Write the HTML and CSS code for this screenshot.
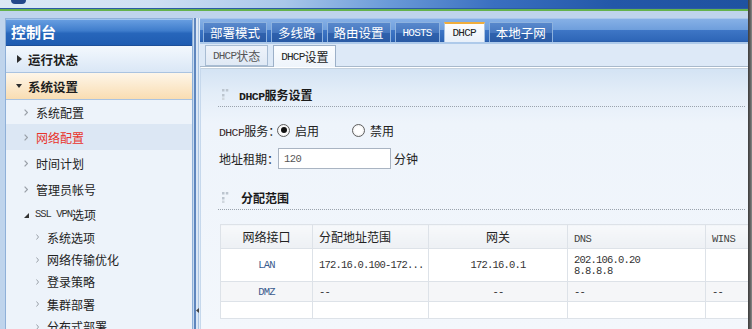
FILE: index.html
```html
<!DOCTYPE html>
<html lang="zh-CN">
<head>
<meta charset="utf-8">
<title>控制台 - DHCP设置</title>
<link rel="stylesheet" href="styles.css">
</head>
<body>
<div class="page">
  <header class="top"><span class="logo"></span></header>
  <div class="main">
    <aside class="side">
      <div class="side-title">控制台</div>
      <div class="grp grp-closed"><span class="tri-r"></span>运行状态</div>
      <div class="grp grp-open"><span class="tri-d"></span>系统设置</div>
      <ul class="items">
        <li class="it first"><svg class="chev" width="4" height="7" viewBox="0 0 4 7"><path d="M0.6 0.6 L3.4 3.5 L0.6 6.4" fill="none" stroke="#9aa0a8" stroke-width="1.2"/></svg>系统配置</li>
        <li class="it cur"><svg class="chev" width="4" height="7" viewBox="0 0 4 7"><path d="M0.6 0.6 L3.4 3.5 L0.6 6.4" fill="none" stroke="#9aa0a8" stroke-width="1.2"/></svg>网络配置</li>
        <li class="it"><svg class="chev" width="4" height="7" viewBox="0 0 4 7"><path d="M0.6 0.6 L3.4 3.5 L0.6 6.4" fill="none" stroke="#9aa0a8" stroke-width="1.2"/></svg>时间计划</li>
        <li class="it"><svg class="chev" width="4" height="7" viewBox="0 0 4 7"><path d="M0.6 0.6 L3.4 3.5 L0.6 6.4" fill="none" stroke="#9aa0a8" stroke-width="1.2"/></svg>管理员帐号</li>
        <li class="it ssl"><svg class="corner" width="5" height="5" viewBox="0 0 5 5"><polygon points="5,0 5,5 0,5" fill="#333"/></svg><span class="m ssl-m">SSL VPN</span>选项</li>
        <li class="it2"><svg class="chev2" width="3" height="6" viewBox="0 0 3 6"><path d="M0.5 0.5 L2.5 3 L0.5 5.5" fill="none" stroke="#9aa0a8" stroke-width="1"/></svg>系统选项</li>
        <li class="it2"><svg class="chev2" width="3" height="6" viewBox="0 0 3 6"><path d="M0.5 0.5 L2.5 3 L0.5 5.5" fill="none" stroke="#9aa0a8" stroke-width="1"/></svg>网络传输优化</li>
        <li class="it2"><svg class="chev2" width="3" height="6" viewBox="0 0 3 6"><path d="M0.5 0.5 L2.5 3 L0.5 5.5" fill="none" stroke="#9aa0a8" stroke-width="1"/></svg>登录策略</li>
        <li class="it2"><svg class="chev2" width="3" height="6" viewBox="0 0 3 6"><path d="M0.5 0.5 L2.5 3 L0.5 5.5" fill="none" stroke="#9aa0a8" stroke-width="1"/></svg>集群部署</li>
        <li class="it2"><svg class="chev2" width="3" height="6" viewBox="0 0 3 6"><path d="M0.5 0.5 L2.5 3 L0.5 5.5" fill="none" stroke="#9aa0a8" stroke-width="1"/></svg>分布式部署</li>
      </ul>
    </aside>
    <div class="splitter"><svg class="split-arrow" width="3" height="5" viewBox="0 0 3 5"><polygon points="3,0 3,5 0,2.5" fill="#444"/></svg></div>
    <section class="content">
      <nav class="tabs">
        <span class="tab">部署模式</span>
        <span class="tab">多线路</span>
        <span class="tab">路由设置</span>
        <span class="tab m">HOSTS</span>
        <span class="tab tab-on m">DHCP</span>
        <span class="tab">本地子网</span>
      </nav>
      <div class="subtabs">
        <span class="stab"><span class="m">DHCP</span>状态</span>
        <span class="stab stab-on"><span class="m">DHCP</span>设置</span>
      </div>
      <div class="body">
        <div class="sec">
          <svg class="sec-ico" width="7" height="11" viewBox="0 0 7 11"><rect x="0" y="0" width="2.5" height="2.5" fill="#bcc5cf"/><rect x="3.8" y="0" width="2.5" height="2.5" fill="#bcc5cf"/><rect x="0" y="5" width="2.5" height="2.5" fill="#bcc5cf"/><rect x="0" y="8.5" width="2.5" height="2.5" fill="#d0d7de"/></svg>
          <span><span class="m mb">DHCP</span>服务设置</span>
        </div>
        <div class="frow r1">
          <span class="lbl"><span class="m ml">DHCP</span>服务：</span>
          <span class="radio on"></span><span class="rtxt">启用</span>
          <span class="radio r2"></span><span class="rtxt">禁用</span>
        </div>
        <div class="frow r2row">
          <span class="lbl">地址租期：</span>
          <span class="inp m">120</span>
          <span class="unit">分钟</span>
        </div>
        <div class="sec sec2">
          <svg class="sec-ico" width="7" height="11" viewBox="0 0 7 11"><rect x="0" y="0" width="2.5" height="2.5" fill="#bcc5cf"/><rect x="3.8" y="0" width="2.5" height="2.5" fill="#bcc5cf"/><rect x="0" y="5" width="2.5" height="2.5" fill="#bcc5cf"/><rect x="0" y="8.5" width="2.5" height="2.5" fill="#d0d7de"/></svg>
          <span>分配范围</span>
        </div>
        <table class="tbl">
          <colgroup><col class="c1"><col class="c2"><col class="c3"><col class="c4"><col class="c5"></colgroup>
          <thead>
            <tr class="hd"><th class="ctr">网络接口</th><th>分配地址范围</th><th class="ctr">网关</th><th><span class="m">DNS</span></th><th><span class="m">WINS</span></th></tr>
          </thead>
          <tbody>
            <tr class="row-lan"><td class="ctr m ifc">LAN</td><td class="m">172.16.0.100-172...</td><td class="ctr m">172.16.0.1</td><td class="m dns">202.106.0.20<br>8.8.8.8</td><td></td></tr>
            <tr class="row-dmz"><td class="ctr m ifc">DMZ</td><td class="m">--</td><td class="ctr m">--</td><td class="m">--</td><td class="m">--</td></tr>
            <tr class="row-empty"><td></td><td></td><td></td><td></td><td></td></tr>
          </tbody>
        </table>
      </div>
    </section>
  </div>
</div>
<div class="edge"></div>
</body>
</html>
```
FILE: styles.css
```css
* { box-sizing: border-box; margin: 0; padding: 0; }
html, body { width: 752px; height: 329px; overflow: hidden; }
body {
  display: flex;
  background: #bfd4ec;
  font-family: "Noto Sans CJK SC", "Noto Sans", sans-serif;
  font-size: 12px;
  color: #222;
}
.m { font-family: "Liberation Mono", "Noto Sans CJK SC", monospace; font-size: 10px; letter-spacing: -0.5px; }

.page { width: 748px; flex: none; display: flex; flex-direction: column; height: 329px; }
.edge { width: 4px; flex: none; background: linear-gradient(to right, #3c3c3c, #5a5a5a 50%, #8a8a8a); }

/* header strip */
.top {
  height: 11px; flex: none;
  background: linear-gradient(to right, #dce9f6 0, #cfe0f3 20%, #a9c7ea 38%, #6a9ad8 52%, #3a6fc0 66%, #2357a8 82%, #1f52a0 100%);
  border-bottom: 2px solid #64b24c;
  box-shadow: inset 0 -1px 0 #2a5ca4;
}
.logo { display: block; width: 15px; height: 4px; margin-left: 11px; background: #24488a; border-radius: 0 0 8px 8px; }

.main { flex: 1; display: flex; padding: 7px 0 0 5px; min-height: 0; }

/* sidebar */
.side { width: 188px; flex: none; background: #edf3fa; border: 1px solid #8fb0d8; border-bottom: none; overflow: hidden; }
.side-title {
  height: 27px; line-height: 26px; padding-left: 5px;
  color: #fff; font-size: 15px; font-weight: bold;
  background: linear-gradient(#6aa0e2 0, #3f7dcc 45%, #2766bb 55%, #1f5cb1 100%);
  box-shadow: inset 0 1px 0 #9cc3ee;
  border-bottom: 1px solid #1d4f98;
}
.grp { height: 27px; display: flex; align-items: center; padding-left: 11px; font-weight: bold; font-size: 12.5px; color: #1e1e1e; border-bottom: 1px solid #aac3e0; }
.grp-closed { background: linear-gradient(#f3f8fd, #dae7f6); }
.grp-open { background: linear-gradient(#fef6e9, #f9ddb2); }
.tri-r { width: 0; height: 0; border-left: 5px solid #2d2d2d; border-top: 4px solid transparent; border-bottom: 4px solid transparent; margin-right: 6px; }
.tri-d { width: 0; height: 0; border-top: 4px solid #2d2d2d; border-left: 3.5px solid transparent; border-right: 3.5px solid transparent; margin: 0 6px 0 -1px; }

.items { list-style: none; }
.it { height: 26px; display: flex; align-items: center; padding-left: 18px; font-size: 12px; color: #222; }
.it.first { height: 24px; }
.it.ssl { height: 24px; }
.it.cur { background: #dce7f4; color: #e8332b; }
.chev { margin-right: 8px; flex: none; }
.corner { margin-right: 6px; margin-top: 2px; flex: none; }
.ssl-m { font-size: 10.5px; letter-spacing: -1px; color: #333; }
.it2 { height: 22.4px; display: flex; align-items: center; padding-left: 30px; font-size: 12px; color: #222; }
.chev2 { margin-right: 8px; flex: none; }

/* splitter */
.splitter {
  width: 7px; flex: none; display: flex; flex-direction: column; align-items: center;
  background: linear-gradient(to right, #c7daef 0, #c7daef 1px, #5e86be 1px, #5e86be 3px, #dbe7f5 3px, #dbe7f5 5px, #aac4e2 5px, #aac4e2 6px, #e3edf8 6px);
}
.split-arrow { margin-top: 290px; margin-left: 1px; }

/* content */
.content { width: 548px; flex: none; display: flex; flex-direction: column; overflow: hidden; }
.tabs {
  height: 24px; flex: none; display: flex; align-items: flex-end; gap: 4px; padding-left: 3px;
  background: linear-gradient(#a9c7eb 0, #a9c7eb 1px, #86b0e6 1px, #6e9edc 50%, #3e76c6 50%, #2f67b8 92%, #2a5ca8 100%);
}
.tab {
  height: 20px; padding: 0 6px; display: flex; align-items: center;
  color: #fff; font-size: 12.5px;
  border: 1px solid #8db2df; border-bottom: none;
  background: linear-gradient(#5888cc 0, #4778c0 50%, #2f62ae 50%, #2a5aa4 100%);
}
.tab.m { font-size: 11px; letter-spacing: -0.8px; padding: 0 7px; }
.tab-on { background: linear-gradient(#fdfdfe, #e8f0fa); color: #222; border-color: #a9c3e3; border-top: 2px solid #f0ad3c; }
.tab.tab-on { padding: 0 8px; }

.subtabs {
  height: 25px; flex: none; display: flex; align-items: flex-start; gap: 5px; padding: 1px 0 0 5px;
  background: #dde9f7; border-top: 2px solid #aecaea;
  border-bottom: 1px solid #a8b9cb;
}
.stab { height: 21px; padding: 0 7px; display: flex; align-items: center; font-size: 12px; color: #555; background: linear-gradient(#eef3fa, #e0e9f5); border: 1px solid #a8bcd3; }
.stab .m { font-size: 11px; letter-spacing: -0.8px; color: #555; }
.stab-on { height: 22px; color: #222; background: linear-gradient(#fbfdff, #eef4fb); border-color: #9cb0c8; border-bottom: none; }
.stab-on .m { color: #222; }

.body {
  flex: 1; padding: 14px 3px 0 17px;
  border-top: 1px solid #fff; box-shadow: inset 0 1px 0 #c4d1de;
  border-left: 1px solid #c6d8ec;
  background: linear-gradient(#d3e3f4 0, #e3edf8 25px, #eef4fb 55px, #f3f7fc 100%);
}
.sec { height: 25px; display: flex; align-items: center; padding-left: 4px; font-weight: bold; font-size: 12px; color: #1a1a1a; border-bottom: 1px dotted #9aa3ad; }
.sec-ico { margin-right: 10px; flex: none; }
.sec2 { margin-top: 16px; }
.sec2 .sec-ico { margin-right: 12px; }
.mb { font-size: 11.5px; font-weight: bold; letter-spacing: -0.5px; }

.frow { display: flex; align-items: center; padding-left: 1px; }
.r1 { height: 20px; margin-top: 13px; }
.r2row { height: 21px; margin-top: 8px; }
.lbl { width: 58px; flex: none; white-space: nowrap; }
.ml { font-size: 11.5px; letter-spacing: -0.6px; color: #3a2a2a; }
.radio {
  width: 13px; height: 13px; flex: none; border-radius: 50%;
  border: 1px solid #5e5e5e; background: radial-gradient(#ffffff 40%, #e4e4e4);
  display: flex; align-items: center; justify-content: center;
}
.radio.on::after { content: ""; width: 6px; height: 6px; border-radius: 50%; background: #111; }
.rtxt { margin-left: 5px; }
.radio.r2 { margin-left: 33px; }
.inp { width: 113px; height: 21px; margin-left: 1px; padding-left: 5px; display: flex; align-items: center; background: #fff; border: 1px solid #a9b4c2; color: #555; font-size: 10.5px; }
.unit { margin-left: 3px; }

.tbl { margin: 14px 0 0 2px; width: 560px; table-layout: fixed; border-collapse: collapse; border: 1px solid #a8b3bf; background: #fff; }
.c1 { width: 92px; } .c2 { width: 116px; } .c3 { width: 139px; } .c4 { width: 138px; } .c5 { width: 75px; }
.tbl th, .tbl td { border: 1px solid #dde2e8; padding: 0 6px; text-align: left; font-weight: normal; white-space: nowrap; overflow: hidden; color: #333; }
.tbl .ctr { text-align: center; }
.tbl th { height: 24px; font-size: 12px; color: #222; background: linear-gradient(#f7f9fb, #edf0f4); }
.tbl th .m { font-size: 10.5px; color: #444; }
.tbl td.m { font-size: 10.5px; letter-spacing: -0.8px; }
.row-lan td { height: 33px; }
.row-dmz td { height: 20px; background: #f5f6f8; }
.row-empty td { height: 17px; }
.tbl .ifc { color: #3a5b8e; }
.tbl .dns { line-height: 11px; padding-top: 1px; }
```
